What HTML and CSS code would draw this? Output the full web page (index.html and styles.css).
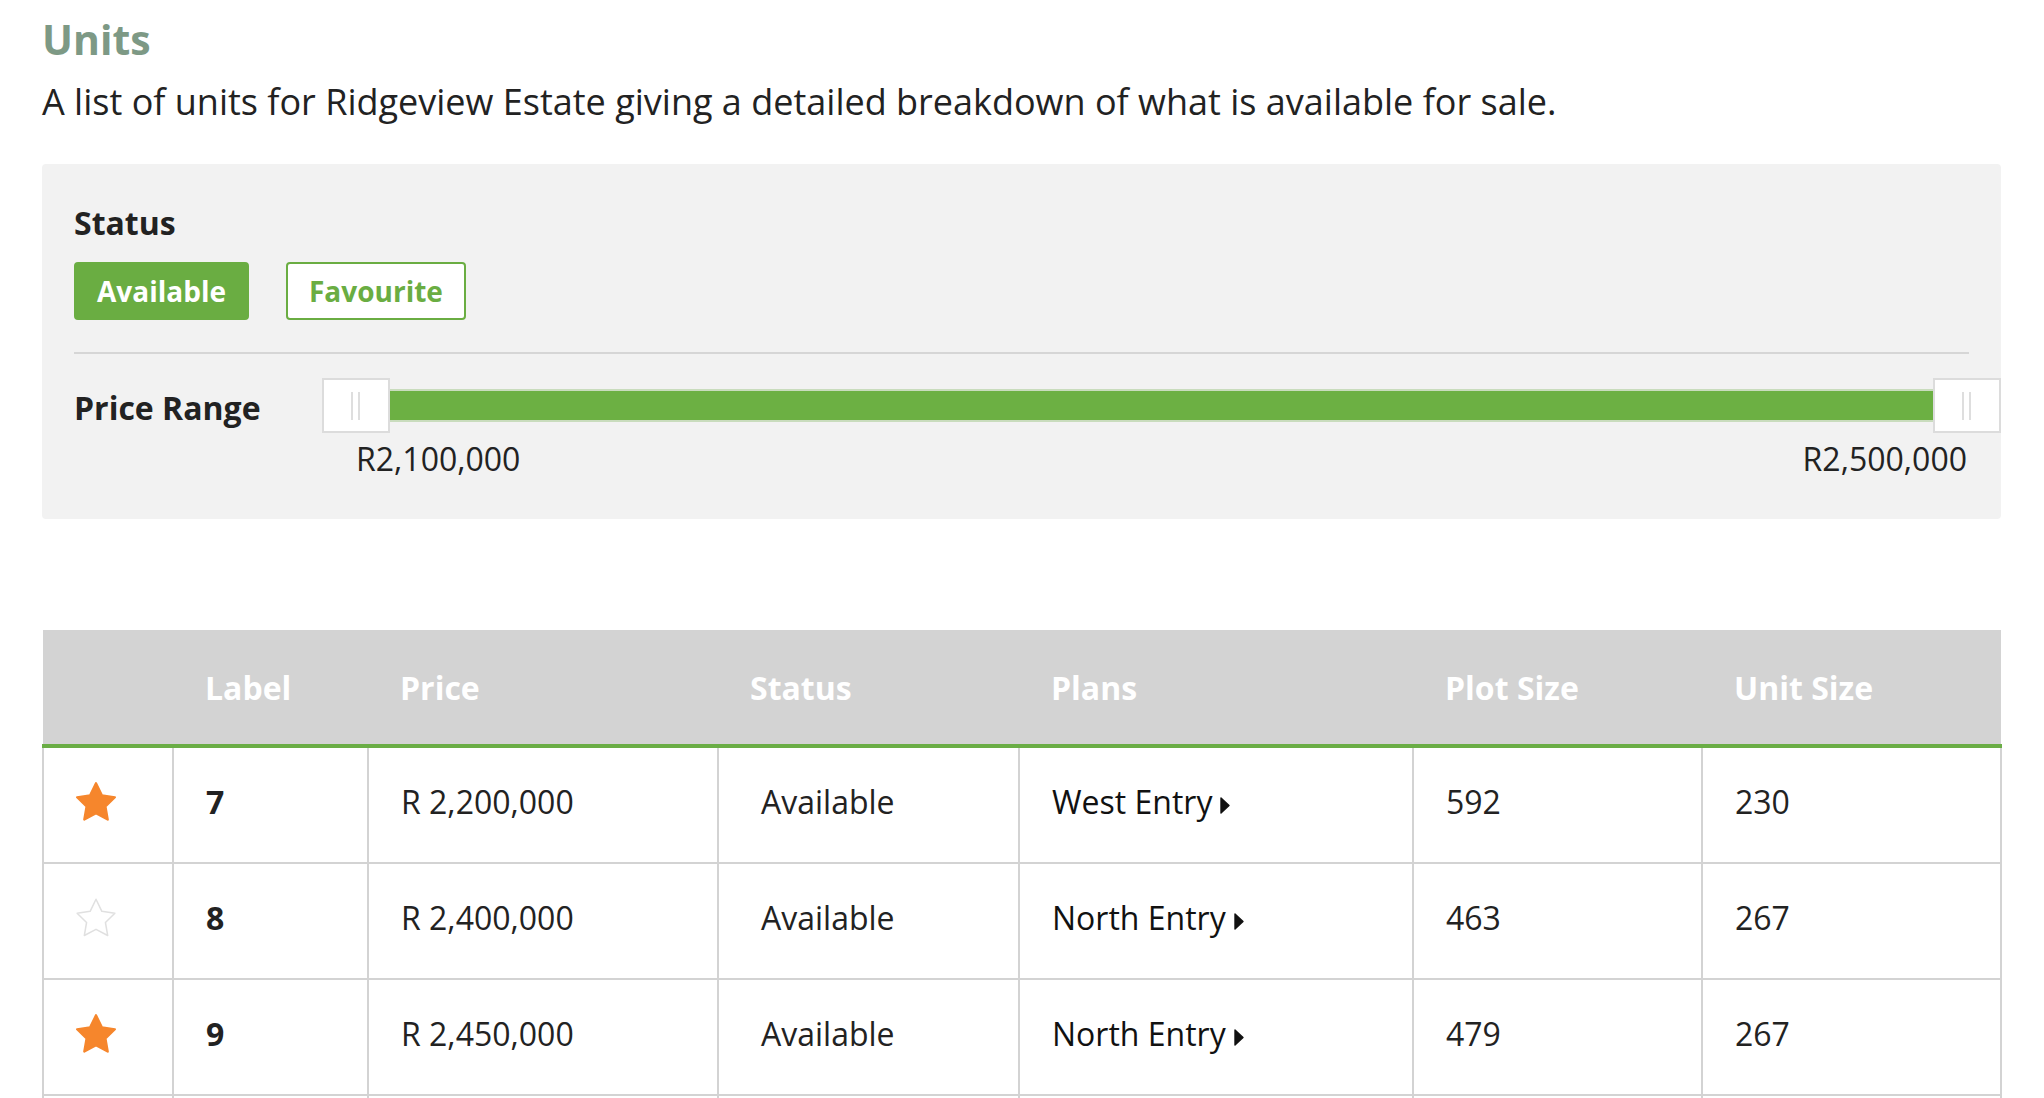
FILE: index.html
```html
<!DOCTYPE html>
<html lang="en">
<head>
<meta charset="utf-8">
<title>Units</title>
<link rel="stylesheet" href="styles.css">
</head>
<body>
<div class="page">
  <h1 class="title">Units</h1>
  <p class="intro">A list of units for Ridgeview Estate giving a detailed breakdown of what is available for sale.</p>

  <section class="filters">
    <div class="filter-label">Status</div>
    <div class="status-buttons">
      <span class="chip chip-active">Available</span>
      <span class="chip chip-outline">Favourite</span>
    </div>
    <div class="divider"></div>
    <div class="range-row">
      <div class="filter-label range-label">Price Range</div>
      <div class="range">
        <div class="range-track">
          <div class="range-bar"></div>
          <span class="handle handle-min"></span>
          <span class="handle handle-max"></span>
        </div>
        <div class="range-values">
          <span>R2,100,000</span>
          <span>R2,500,000</span>
        </div>
      </div>
    </div>
  </section>

  <table class="units-table">
    <colgroup>
      <col class="c-fav"><col class="c-label"><col class="c-price"><col class="c-status"><col class="c-plans"><col class="c-plot"><col class="c-unit">
    </colgroup>
    <thead>
      <tr><th></th><th>Label</th><th>Price</th><th>Status</th><th>Plans</th><th>Plot Size</th><th>Unit Size</th></tr>
    </thead>
    <tbody>
      <tr>
        <td class="fav"><svg class="star star-on" viewBox="1.4 1 21.2 20.3"><polygon points="12,1.5 15.1,7.9 22,8.9 17,13.8 18.2,20.7 12,17.4 5.8,20.7 7,13.8 2,8.9 8.9,7.9"/></svg></td>
        <td class="label">7</td>
        <td>R 2,200,000</td>
        <td class="status">Available</td>
        <td class="plans">West Entry<svg class="caret" viewBox="0 0 10 17"><polygon points="1,1 9,8.5 1,16"/></svg></td>
        <td>592</td>
        <td>230</td>
      </tr>
      <tr>
        <td class="fav"><svg class="star star-off" viewBox="1.4 1 21.2 20.3"><polygon points="12,1.5 15.1,7.9 22,8.9 17,13.8 18.2,20.7 12,17.4 5.8,20.7 7,13.8 2,8.9 8.9,7.9"/></svg></td>
        <td class="label">8</td>
        <td>R 2,400,000</td>
        <td class="status">Available</td>
        <td class="plans">North Entry<svg class="caret" viewBox="0 0 10 17"><polygon points="1,1 9,8.5 1,16"/></svg></td>
        <td>463</td>
        <td>267</td>
      </tr>
      <tr>
        <td class="fav"><svg class="star star-on" viewBox="1.4 1 21.2 20.3"><polygon points="12,1.5 15.1,7.9 22,8.9 17,13.8 18.2,20.7 12,17.4 5.8,20.7 7,13.8 2,8.9 8.9,7.9"/></svg></td>
        <td class="label">9</td>
        <td>R 2,450,000</td>
        <td class="status">Available</td>
        <td class="plans">North Entry<svg class="caret" viewBox="0 0 10 17"><polygon points="1,1 9,8.5 1,16"/></svg></td>
        <td>479</td>
        <td>267</td>
      </tr>
      <tr>
        <td></td><td></td><td></td><td></td><td></td><td></td><td></td>
      </tr>
    </tbody>
  </table>
</div>
</body>
</html>
```

FILE: styles.css
```css
body {
  margin: 0;
  font-family: "Open Sans", "Liberation Sans", sans-serif;
  color: #222;
  background: #fff;
}

.page {
  padding: 11px 43px 0 42px;
}

.title {
  margin: 0;
  font-size: 41px;
  font-weight: 700;
  line-height: 56px;
  color: #7d9985;
}

.intro {
  margin: 10px 0 0;
  font-size: 36px;
  line-height: 49px;
}

.filters {
  margin-top: 38px;
  background: #f2f2f2;
  border-radius: 4px;
  padding: 37px 32px 38px;
}

.filter-label {
  font-size: 32px;
  font-weight: 700;
  line-height: 44px;
  color: #222;
}

.status-buttons {
  display: flex;
  gap: 37px;
  margin-top: 17px;
}

.chip {
  height: 58px;
  box-sizing: border-box;
  padding: 0 21px;
  border: 2px solid #6aad42;
  border-radius: 4px;
  font-size: 28px;
  font-weight: 700;
  display: flex;
  align-items: center;
}

.chip-active {
  background: #6aad42;
  color: #fff;
}

.chip-outline {
  background: #fff;
  color: #6aad42;
}

.divider {
  height: 2px;
  background: #d6d6d6;
  margin-top: 32px;
}

.range-row {
  display: flex;
  margin-top: 24px;
}

.range-label {
  width: 248px;
  flex: none;
  padding-top: 8px;
}

.range {
  flex: 1;
  margin-right: -32px;
}

.range-track {
  position: relative;
  height: 55px;
  display: flex;
  align-items: center;
  padding: 0 34px;
}

.range-bar {
  flex: 1;
  height: 33px;
  box-sizing: border-box;
  background: #6cb043;
  border: 2px solid #c9dcbd;
}

.handle {
  position: absolute;
  top: 0;
  width: 68px;
  height: 55px;
  box-sizing: border-box;
  background: #fff;
  border: 2px solid #dcdcdc;
}

.handle::before,
.handle::after {
  content: "";
  position: absolute;
  top: 12px;
  width: 2px;
  height: 28px;
  background: #dedede;
}

.handle::before { left: 27px; }
.handle::after { left: 34px; }

.handle-min { left: 0; }
.handle-max { right: 0; }

.range-values {
  display: flex;
  justify-content: space-between;
  padding: 0 34px;
  margin-top: 4px;
  font-size: 32px;
  line-height: 44px;
}

.units-table {
  margin-top: 111px;
  width: 100%;
  border-collapse: collapse;
  table-layout: fixed;
  font-size: 32px;
}

.c-fav { width: 130px; }
.c-label { width: 195px; }
.c-price { width: 350px; }
.c-status { width: 301px; }
.c-plans { width: 394px; }
.c-plot { width: 289px; }
.c-unit { width: 299px; }

.units-table th {
  background: #d3d3d3;
  color: #fff;
  font-weight: 700;
  text-align: left;
  height: 114px;
  padding: 0 0 0 32px;
  border-bottom: 4px solid #6aad45;
}

.units-table td {
  height: 106px;
  padding: 0 0 8px 32px;
  border: 2px solid #d3d3d3;
  color: #222;
}

.units-table td.fav {
  height: 106px;
  padding-bottom: 8px;
}

.units-table td.status {
  padding-left: 42px;
}

.units-table td.label {
  font-weight: 700;
}

.units-table td.plans {
  color: #111;
}

.caret {
  width: 10px;
  height: 17px;
  margin-left: 8px;
  fill: #111;
  stroke: #111;
  stroke-width: 1.4;
  stroke-linejoin: round;
  vertical-align: 0;
}

.star {
  display: block;
  width: 40px;
  height: 39px;
}

.star polygon {
  stroke-linejoin: round;
}

.star-on polygon {
  fill: #f6862c;
  stroke: #f6862c;
  stroke-width: 1.2;
}

.star-off polygon {
  fill: #fff;
  stroke: #e0e0e0;
  stroke-width: 0.8;
}
```
